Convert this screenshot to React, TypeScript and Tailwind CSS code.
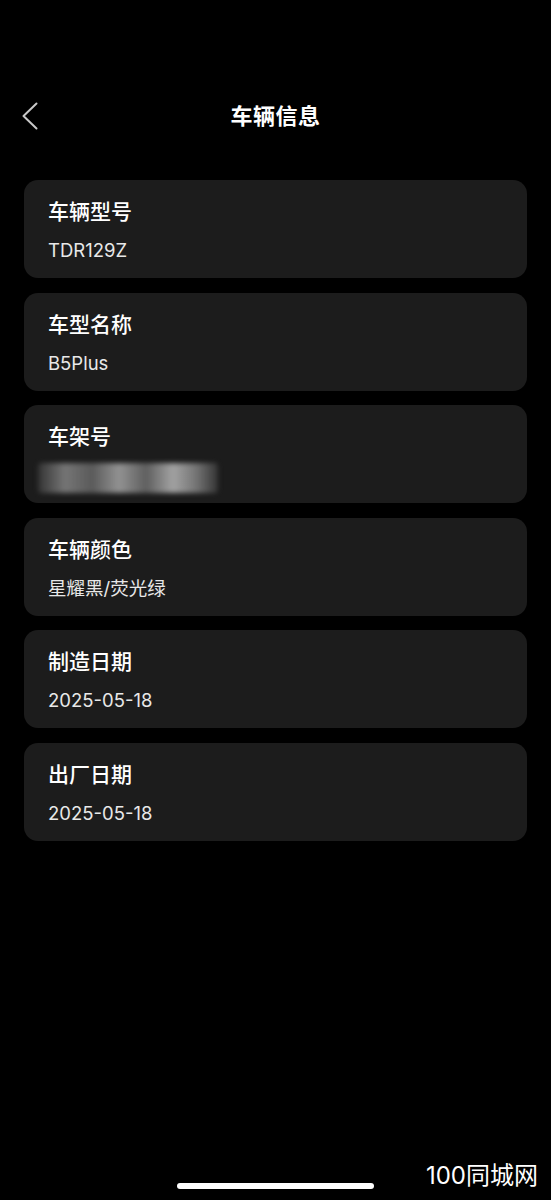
const ITEMS = [
  { label: '车辆型号', value: 'TDR129Z' },
  { label: '车型名称', value: 'B5Plus' },
  { label: '车架号', value: null },
  { label: '车辆颜色', value: '星耀黑/荧光绿' },
  { label: '制造日期', value: '2025-05-18' },
  { label: '出厂日期', value: '2025-05-18' },
]

const FONT = "font-['Inter','Noto_Sans_CJK_SC',sans-serif]"

function BackIcon() {
  return (
    <svg width="18" height="28" viewBox="0 0 18 28" fill="none" className="text-[#c8c8c8]">
      <path d="M15.5 1.5 L2.5 14 L15.5 26.5" stroke="currentColor" strokeWidth="2" strokeLinecap="round" strokeLinejoin="round" />
    </svg>
  )
}

// scribbled-out VIN, as in the screenshot
function Smudge() {
  return (
    <div className="-ml-[10px] mt-[10px] flex h-[34px] w-[190px] items-center">
      <div className="h-[30px] w-[180px] rounded-[3px] bg-[linear-gradient(90deg,#3a3a3a_0%,#8c8c8c_15%,#6a6a6a_30%,#b0b0b0_45%,#707070_60%,#c4c4c4_75%,#8a8a8a_88%,#3a3a3a_100%)] opacity-80 blur-[2.5px]" />
    </div>
  )
}

export default function App() {
  return (
    <div className={`flex h-[1200px] w-full flex-col overflow-hidden bg-black pt-[96px] ${FONT}`}>
      <div className="grid h-[40px] grid-cols-[1fr_auto_1fr] items-center">
        <div className="pl-[21px]">
          <BackIcon />
        </div>
        <h1 className="text-[22px] font-semibold text-white tracking-[0.5px]">车辆信息</h1>
        <div />
      </div>

      <div className="mx-[24px] mt-[44px] flex flex-col gap-[14.5px]">
        {ITEMS.map((item) => (
          <div key={item.label} className="h-[98px] rounded-[14px] bg-[#1c1c1c] pl-[24px] pt-[18px]">
            <div className="text-[21px] leading-[28px] font-medium text-white">{item.label}</div>
            {item.value ? (
              <div className="mt-[12px] text-[18.5px] leading-[24px] text-[#e8e8e8]">{item.value}</div>
            ) : (
              <Smudge />
            )}
          </div>
        ))}
      </div>

      <div className="mt-auto grid grid-cols-[1fr_197px_1fr] items-end pb-[10px]">
        <div />
        <div className="mb-[1px] h-[6px] rounded-full bg-white" />
        <div className="justify-self-end pr-[13px] text-[24px] leading-[28px] text-white">100同城网</div>
      </div>
    </div>
  )
}
